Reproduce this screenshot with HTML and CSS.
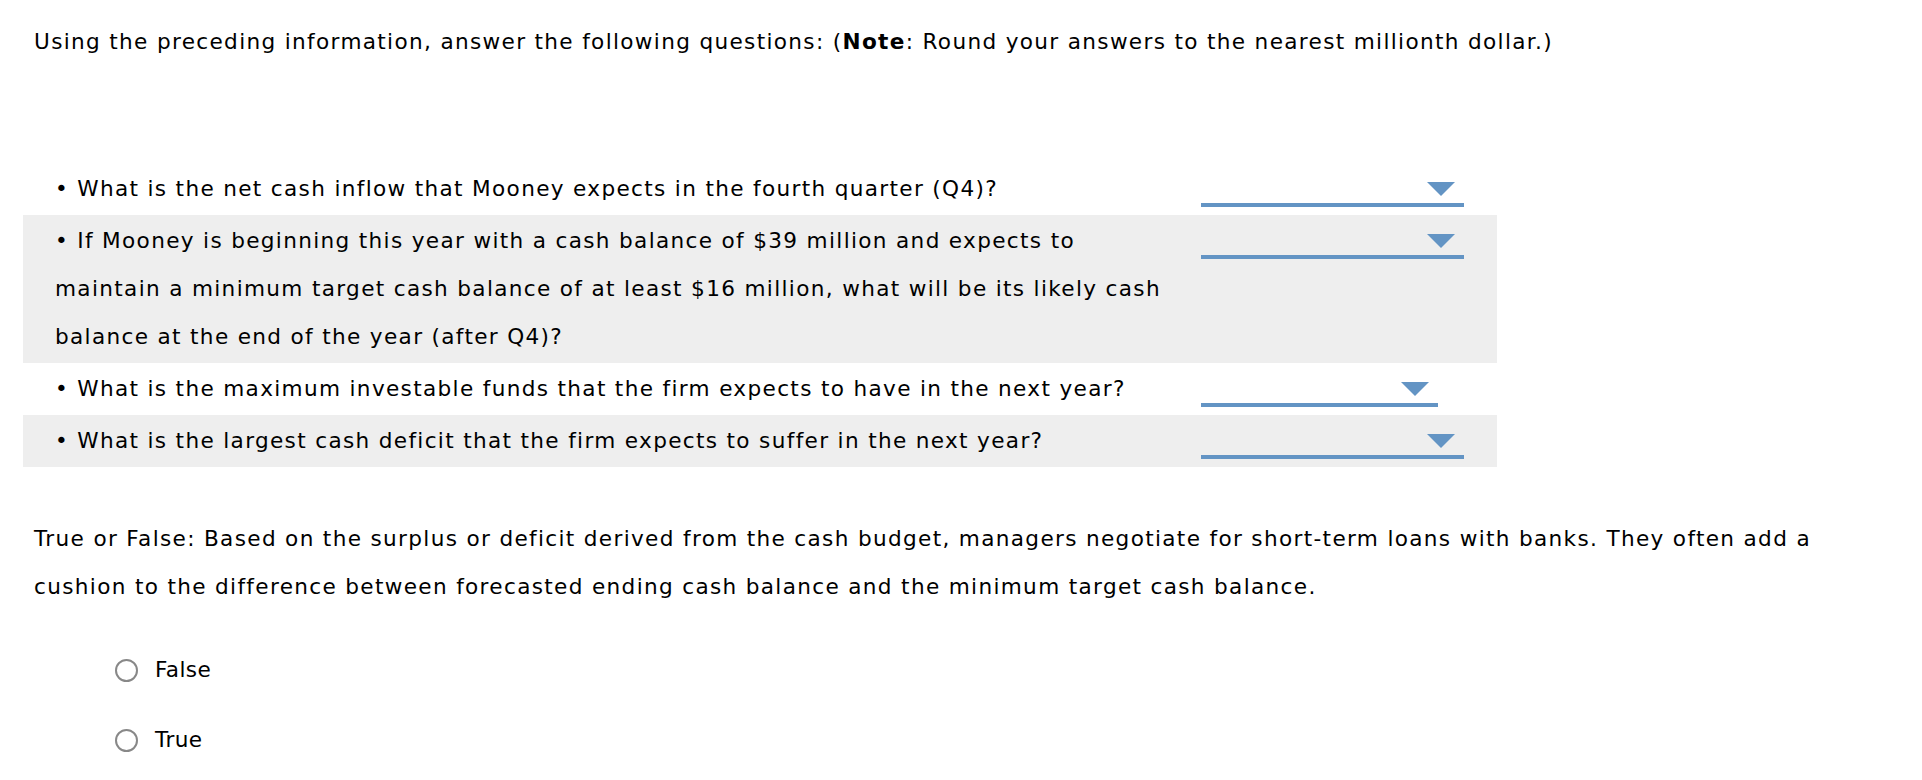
FILE: index.html
```html
<!DOCTYPE html>
<html lang="en">
<head>
<meta charset="utf-8">
<title>Cash budget questions</title>
<link rel="stylesheet" href="styles.css">
</head>
<body>
<div class="page">
  <p class="text">Using the preceding information, answer the following questions: (<b>Note</b>: Round your answers to the nearest millionth dollar.)</p>

  <div class="qtable">
    <div class="row">
      <div class="q">• What is the net cash inflow that Mooney expects in the fourth quarter (Q4)?</div>
      <div class="a"><span class="select wide"><span class="caret"></span></span></div>
    </div>
    <div class="row shade">
      <div class="q">• If Mooney is beginning this year with a cash balance of $39 million and expects to<br>maintain a minimum target cash balance of at least $16 million, what will be its likely cash<br>balance at the end of the year (after Q4)?</div>
      <div class="a"><span class="select wide"><span class="caret"></span></span></div>
    </div>
    <div class="row">
      <div class="q">• What is the maximum investable funds that the firm expects to have in the next year?</div>
      <div class="a"><span class="select narrow"><span class="caret"></span></span></div>
    </div>
    <div class="row shade">
      <div class="q">• What is the largest cash deficit that the firm expects to suffer in the next year?</div>
      <div class="a"><span class="select wide"><span class="caret"></span></span></div>
    </div>
  </div>

  <p class="text tf">True or False: Based on the surplus or deficit derived from the cash budget, managers negotiate for short-term loans with banks. They often add a<br>cushion to the difference between forecasted ending cash balance and the minimum target cash balance.</p>

  <div class="choices">
    <label class="choice"><input type="radio" name="tf" class="radio"><span>False</span></label>
    <label class="choice"><input type="radio" name="tf" class="radio"><span>True</span></label>
  </div>
</div>
</body>
</html>
```

FILE: styles.css
```css
html, body {
  margin: 0;
  padding: 0;
  background: #ffffff;
}

body {
  font-family: "DejaVu Sans", Verdana, sans-serif;
  font-size: 21.6px;
  line-height: 48px;
  letter-spacing: 1.33px;
  color: #000000;
}

.page {
  padding: 18px 0 0 23px;
}

.text {
  margin: 0;
  padding-left: 11px;
}

.text b {
  font-weight: bold;
}

.qtable {
  margin-top: 97px;
  width: 1474px;
  display: flex;
  flex-direction: column;
}

.row {
  display: flex;
  align-items: flex-start;
  padding: 2px 0;
}

.row.shade {
  background: #eeeeee;
}

.q {
  width: 1146px;
  padding-left: 32px;
  flex: none;
  white-space: nowrap;
}

.a {
  flex: none;
  margin-top: -2px;
}

.select {
  position: relative;
  display: block;
  height: 40px;
  border-bottom: 4px solid #6394c4;
}

.select.wide {
  width: 263px;
}

.select.narrow {
  width: 237px;
}

.caret {
  position: absolute;
  right: 9px;
  top: 19px;
  width: 0;
  height: 0;
  border-left: 14px solid transparent;
  border-right: 14px solid transparent;
  border-top: 14px solid #6394c4;
}

.tf {
  margin-top: 48px;
}

.choices {
  margin-top: 35px;
  padding-left: 92px;
  display: flex;
  flex-direction: column;
  gap: 22px;
}

.choice {
  display: flex;
  align-items: center;
  height: 48px;
  gap: 17px;
  letter-spacing: 0.4px;
}

.radio {
  appearance: none;
  -webkit-appearance: none;
  margin: 0;
  width: 23px;
  height: 23px;
  border: 2px solid #888888;
  border-radius: 50%;
  background: #ffffff;
  box-sizing: border-box;
  flex: none;
}
```
